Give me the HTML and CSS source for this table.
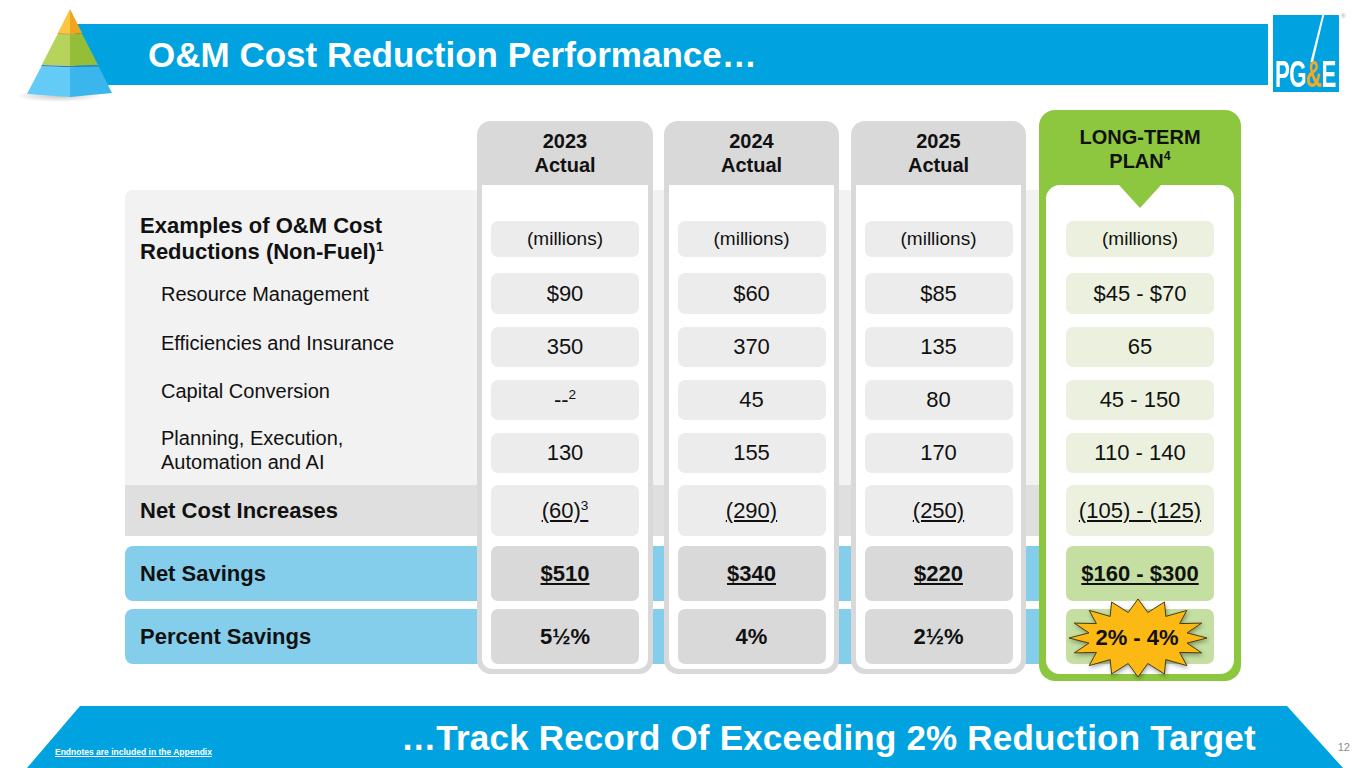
FILE: index.html
```html
<!DOCTYPE html>
<html lang="en">
<head>
<meta charset="utf-8">
<title>O&amp;M Cost Reduction Performance</title>
<link rel="stylesheet" href="styles.css">
</head>
<body>
<div class="slide">
  <header class="top">
    <svg class="pyramid" width="100" height="105" viewBox="0 0 100 105">
      <defs>
        <radialGradient id="shadow" cx="0.45" cy="0.5" r="0.5">
          <stop offset="0" stop-color="#9a9a9a" stop-opacity="0.55"/>
          <stop offset="1" stop-color="#9a9a9a" stop-opacity="0"/>
        </radialGradient>
      </defs>
      <ellipse cx="48" cy="96" rx="44" ry="6" fill="url(#shadow)"/>
      <polygon points="55,9 42.9,33 55,34" fill="#FCC540"/>
      <polygon points="55,9 55,34 67,33" fill="#EFA51E"/>
      <polygon points="42.9,33.6 26.7,65 55,66 55,34.6" fill="#B6D35C"/>
      <polygon points="55,34.6 55,66 83,65 67,33.6" fill="#94BE38"/>
      <polygon points="26.4,66.2 12,94 55,97 55,67.2" fill="#63CBF5"/>
      <polygon points="55,67.2 55,97 97,93 83.6,66.2" fill="#3AB6EC"/>
      <polyline points="42.9,33.3 55,34.3 67,33.3" fill="none" stroke="#C98A17" stroke-width="0.8"/>
      <polyline points="26.6,65.6 55,66.6 83.3,65.6" fill="none" stroke="#2F7FB8" stroke-width="1.2"/>
    </svg>
    <div class="title-bar"><h1>O&amp;M Cost Reduction Performance…</h1></div>
    <div class="logo">
      <svg class="logo-slash" width="66" height="48" viewBox="0 0 66 48">
        <polygon points="49.3,0 51.2,0 40,47 37.4,47" fill="#ffffff"/>
      </svg>
      <span class="logo-text">PG<span class="amp">&amp;</span>E</span>
    </div>
    <span class="reg">®</span>
  </header>

  <main class="board">
    <div class="panel"></div>
    <div class="band band-nc"></div>
    <div class="band band-ns"></div>
    <div class="band band-ps"></div>

    <div class="frame c1"><div class="frame-head"><span>2023<br>Actual</span></div><div class="frame-body"></div></div>
    <div class="frame c2"><div class="frame-head"><span>2024<br>Actual</span></div><div class="frame-body"></div></div>
    <div class="frame c3"><div class="frame-head"><span>2025<br>Actual</span></div><div class="frame-body"></div></div>
    <div class="frame frame-plan c4"><div class="frame-head"><span>LONG-TERM<br>PLAN<sup>4</sup></span></div><div class="frame-body"></div></div>

    <div class="label label-head r-mil">Examples of O&amp;M Cost<br>Reductions (Non-Fuel)<sup>1</sup></div>
    <div class="label label-sub r-a">Resource Management</div>
    <div class="label label-sub r-b up4">Efficiencies and Insurance</div>
    <div class="label label-sub r-c up9">Capital Conversion</div>
    <div class="label label-sub r-d up3">Planning, Execution,<br>Automation and AI</div>
    <div class="label label-strong r-nc">Net Cost Increases</div>
    <div class="label label-strong r-ns">Net Savings</div>
    <div class="label label-strong r-ps">Percent Savings</div>

    <div class="cell mil c1 r-mil">(millions)</div>
    <div class="cell c1 r-a">$90</div>
    <div class="cell c1 r-b">350</div>
    <div class="cell c1 r-c"><span>--<sup>2</sup></span></div>
    <div class="cell c1 r-d">130</div>
    <div class="cell c1 r-nc"><u>(60)<sup>3</sup></u></div>
    <div class="cell dark c1 r-ns"><b><u>$510</u></b></div>
    <div class="cell dark c1 r-ps"><b>5½%</b></div>

    <div class="cell mil c2 r-mil">(millions)</div>
    <div class="cell c2 r-a">$60</div>
    <div class="cell c2 r-b">370</div>
    <div class="cell c2 r-c">45</div>
    <div class="cell c2 r-d">155</div>
    <div class="cell c2 r-nc"><u>(290)</u></div>
    <div class="cell dark c2 r-ns"><b><u>$340</u></b></div>
    <div class="cell dark c2 r-ps"><b>4%</b></div>

    <div class="cell mil c3 r-mil">(millions)</div>
    <div class="cell c3 r-a">$85</div>
    <div class="cell c3 r-b">135</div>
    <div class="cell c3 r-c">80</div>
    <div class="cell c3 r-d">170</div>
    <div class="cell c3 r-nc"><u>(250)</u></div>
    <div class="cell dark c3 r-ns"><b><u>$220</u></b></div>
    <div class="cell dark c3 r-ps"><b>2½%</b></div>

    <div class="cell mil green c4 r-mil">(millions)</div>
    <div class="cell green c4 r-a">$45 - $70</div>
    <div class="cell green c4 r-b">65</div>
    <div class="cell green c4 r-c">45 - 150</div>
    <div class="cell green c4 r-d">110 - 140</div>
    <div class="cell green c4 r-nc"><u>(105) - (125)</u></div>
    <div class="cell green-dark c4 r-ns"><b><u>$160 - $300</u></b></div>
    <div class="cell green-dark burst-cell c4 r-ps">
      <svg class="burst" width="140" height="80" viewBox="0 0 140 80">
        <polygon points="70,1 79.8,14.5 96.4,4 97.8,18.4 118.8,12.4 111.6,25.6 133.7,25.1 119,34.9 139,40 119,45.1 133.7,54.9 111.6,54.4 118.8,67.6 97.8,61.6 96.4,76 79.8,65.5 70,79 60.2,65.5 43.6,76 42.2,61.6 21.2,67.6 28.4,54.4 6.3,54.9 21,45.1 1,40 21,34.9 6.3,25.1 28.4,25.6 21.2,12.4 42.2,18.4 43.6,4 60.2,14.5" fill="#FDB913" stroke="#4a3b10" stroke-width="1"/>
      </svg>
      <b class="burst-text">2% - 4%</b>
    </div>
  </main>

  <footer class="foot">
    <span class="endnotes">Endnotes are included in the Appendix</span>
    <span class="tagline">…Track Record Of Exceeding 2% Reduction Target</span>
    <span class="page-num">12</span>
  </footer>
</div>
</body>
</html>
```

FILE: styles.css
```css
html, body {
  margin: 0;
  padding: 0;
  background: #ffffff;
}

body {
  font-family: "Liberation Sans", Arial, sans-serif;
  color: #111111;
}

.slide {
  width: 1365px;
  height: 768px;
  overflow: hidden;
  display: flex;
  flex-direction: column;
  background: #ffffff;
}

/* ---------- header ---------- */
.top {
  height: 110px;
  display: flex;
  align-items: flex-start;
}

.pyramid {
  margin-left: 15px;
  flex: none;
  z-index: 2;
}

.title-bar {
  margin-left: -40px;
  margin-top: 24px;
  width: 1193px;
  height: 61px;
  background: #00A3E0;
  z-index: 1;
  flex: none;
}

.title-bar h1 {
  margin: 0;
  padding-left: 73px;
  font-size: 35px;
  line-height: 61px;
  font-weight: 700;
  color: #ffffff;
  white-space: nowrap;
}

.logo {
  margin-left: 5px;
  margin-top: 15px;
  width: 66px;
  height: 77px;
  flex: none;
  background: #00A3E0;
  display: flex;
  flex-direction: column;
  align-items: flex-start;
}

.logo-slash {
  flex: none;
  display: block;
}

.logo-text {
  display: block;
  width: max-content;
  margin-top: -3px;
  margin-left: 2px;
  font-size: 36px;
  line-height: 30px;
  font-weight: 700;
  letter-spacing: -1px;
  color: #ffffff;
  white-space: nowrap;
  transform: scaleX(0.62);
  transform-origin: left center;
}

.logo-text .amp {
  color: #F7A823;
}

.reg {
  margin-left: 2px;
  margin-top: 13px;
  font-size: 6px;
  color: #9a9a9a;
}

/* ---------- board grid ---------- */
.board {
  margin-left: 125px;
  display: grid;
  grid-template-columns: 352px 176px 11px 175px 12px 175px 13px 202px;
  grid-template-rows: 11px 64px 5px 31px 36px 16px 41px 13px 40px 13px 40px 13px 40px 12px 51px 10px 55px 8px 55px 10px 7px;
  height: 571px;
}

.panel {
  grid-column: 1 / -1;
  grid-row: 4 / 15;
  background: #F2F2F2;
  border-top-left-radius: 8px;
  z-index: 0;
}

.band {
  grid-column: 1 / -1;
  z-index: 0;
}

.band-nc {
  grid-row: 15 / 16;
  background: #DFDFDF;
}

.band-ns {
  grid-row: 17 / 18;
  background: #84CEEC;
  border-radius: 8px 0 0 8px;
}

.band-ps {
  grid-row: 19 / 20;
  background: #84CEEC;
  border-radius: 8px 0 0 8px;
}

.c1 { grid-column: 2; }
.c2 { grid-column: 4; }
.c3 { grid-column: 6; }
.c4 { grid-column: 8; }

.r-mil { grid-row: 5; }
.r-a { grid-row: 7; }
.r-b { grid-row: 9; }
.r-c { grid-row: 11; }
.r-d { grid-row: 13; }
.r-nc { grid-row: 15; }
.r-ns { grid-row: 17; }
.r-ps { grid-row: 19; }

/* column frames */
.frame {
  grid-row: 2 / 21;
  z-index: 1;
  display: flex;
  flex-direction: column;
  background: #D9D9D9;
  border-radius: 14px;
  padding: 0 5px 5px;
}

.frame-head {
  height: 64px;
  flex: none;
  display: flex;
  align-items: center;
  justify-content: center;
  text-align: center;
  font-size: 20px;
  line-height: 24px;
  font-weight: 700;
  color: #111111;
}

.frame-body {
  flex: 1;
  background: #ffffff;
  border-radius: 0 0 10px 10px;
}

.frame-plan {
  grid-row: 1 / 22;
  background: #8DC63F;
  border-radius: 16px;
  padding: 0 7px 7px;
}

.frame-plan .frame-head {
  height: 75px;
  padding-top: 2px;
  box-sizing: border-box;
}

.frame-plan .frame-body {
  border-radius: 14px;
  position: relative;
}

.frame-plan .frame-body::before {
  content: "";
  position: absolute;
  top: 0;
  left: 50%;
  margin-left: -21px;
  border-left: 21px solid transparent;
  border-right: 21px solid transparent;
  border-top: 23px solid #8DC63F;
}

sup {
  font-size: 0.62em;
  vertical-align: super;
  line-height: 0;
}

/* labels */
.label {
  grid-column: 1;
  z-index: 2;
  align-self: center;
  white-space: nowrap;
}

.label-head {
  padding-left: 15px;
  font-size: 22px;
  line-height: 26px;
  font-weight: 700;
}

.label-sub {
  padding-left: 36px;
  font-size: 20px;
  line-height: 24px;
}

.label-strong {
  padding-left: 15px;
  font-size: 22px;
  line-height: 26px;
  font-weight: 700;
}

.up3 { margin-bottom: 6px; }
.up4 { margin-bottom: 8px; }
.up9 { margin-bottom: 18px; }

/* cells */
.cell {
  z-index: 2;
  justify-self: center;
  width: 148px;
  border-radius: 7px;
  display: flex;
  align-items: center;
  justify-content: center;
  background: #ECECEC;
  font-size: 22px;
  color: #111111;
  white-space: nowrap;
}

.cell.mil {
  font-size: 19px;
}

.cell.dark {
  background: #D9D9D9;
}

.cell.green {
  background: #EBF1DE;
}

.cell.green-dark {
  background: #C4DFA1;
}

.burst-cell {
  position: relative;
}

.burst {
  position: absolute;
  left: 50%;
  top: 50%;
  margin-left: -72px;
  margin-top: -39px;
  filter: drop-shadow(1px 2px 2px rgba(0, 0, 0, 0.35));
}

.burst-text {
  position: relative;
  margin-left: -6px;
  margin-top: 2px;
}

/* footer */
.foot {
  margin-top: 25px;
  height: 62px;
  position: relative;
  display: flex;
  align-items: center;
}

.foot::before {
  content: "";
  position: absolute;
  left: 27px;
  top: 0;
  width: 1316px;
  height: 62px;
  background: #00A3E0;
  clip-path: polygon(53px 0, 1260px 0, 1316px 62px, 0 62px);
}

.endnotes {
  position: relative;
  margin-left: 55px;
  align-self: flex-end;
  margin-bottom: 11px;
  font-size: 8.5px;
  font-weight: 700;
  color: #ffffff;
  text-decoration: underline;
  white-space: nowrap;
}

.tagline {
  position: relative;
  margin-left: auto;
  font-size: 35px;
  font-weight: 700;
  letter-spacing: 0.2px;
  color: #ffffff;
  white-space: nowrap;
  margin-top: 2px;
}

.page-num {
  position: relative;
  margin-left: 82px;
  margin-right: 15px;
  align-self: flex-end;
  margin-bottom: 15px;
  font-size: 11px;
  color: #8c8c8c;
}
```
